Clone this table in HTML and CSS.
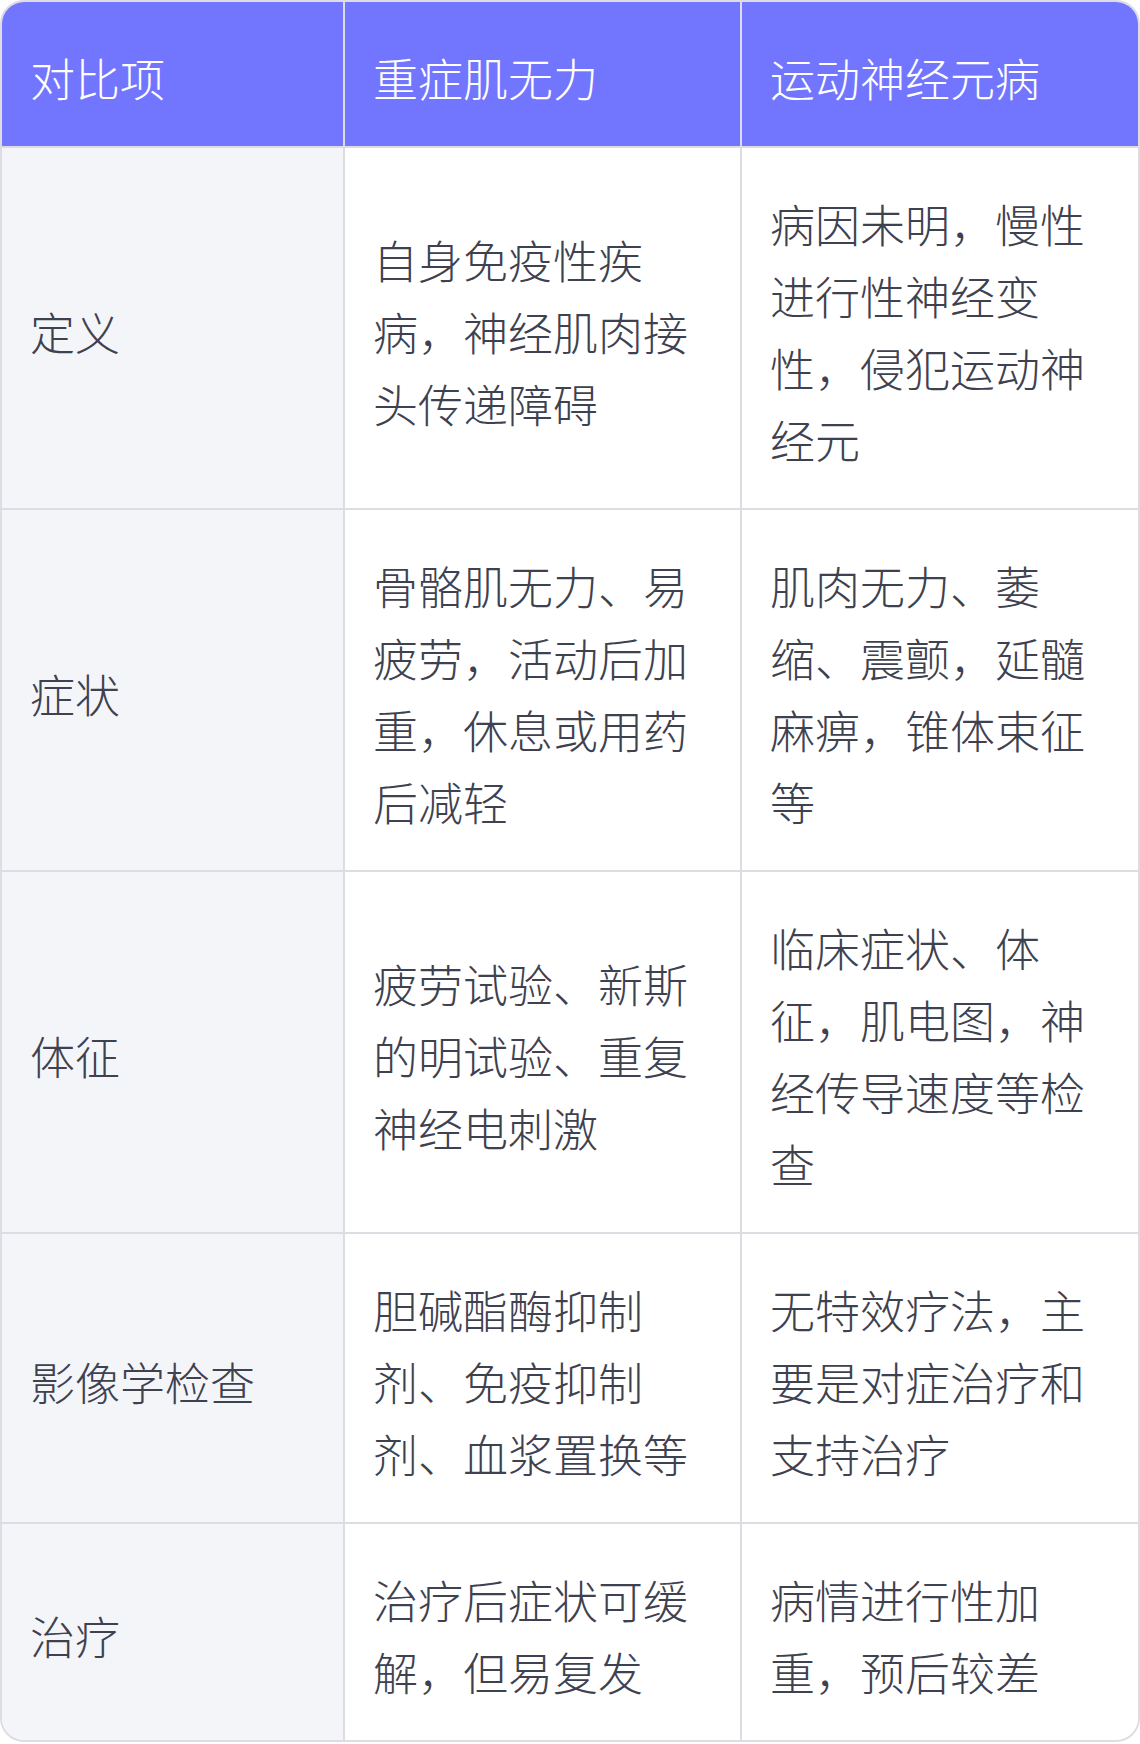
FILE: index.html
```html
<!DOCTYPE html>
<html lang="zh-CN">
<head>
<meta charset="utf-8">
<link rel="stylesheet" href="styles.css">
<title>重症肌无力与运动神经元病对比</title>
</head>
<body>
<div class="wrap">
  <table class="cmp">
    <colgroup>
      <col class="c1">
      <col class="c2">
      <col class="c3">
    </colgroup>
    <thead>
      <tr>
        <th>对比项</th>
        <th>重症肌无力</th>
        <th>运动神经元病</th>
      </tr>
    </thead>
    <tbody>
      <tr>
        <td class="key">定义</td>
        <td>自身免疫性疾病，神经肌肉接头传递障碍</td>
        <td>病因未明，慢性进行性神经变性，侵犯运动神经元</td>
      </tr>
      <tr>
        <td class="key">症状</td>
        <td>骨骼肌无力、易疲劳，活动后加重，休息或用药后减轻</td>
        <td>肌肉无力、萎缩、震颤，延髓麻痹，锥体束征等</td>
      </tr>
      <tr>
        <td class="key">体征</td>
        <td>疲劳试验、新斯的明试验、重复神经电刺激</td>
        <td>临床症状、体征，肌电图，神经传导速度等检查</td>
      </tr>
      <tr>
        <td class="key">影像学检查</td>
        <td>胆碱酯酶抑制剂、免疫抑制剂、血浆置换等</td>
        <td>无特效疗法，主要是对症治疗和支持治疗</td>
      </tr>
      <tr>
        <td class="key">治疗</td>
        <td>治疗后症状可缓解，但易复发</td>
        <td>病情进行性加重，预后较差</td>
      </tr>
    </tbody>
  </table>
</div>
</body>
</html>
```

FILE: styles.css
```css
html, body {
  margin: 0;
  padding: 0;
  background: #ffffff;
}

.wrap {
  width: 1140px;
  box-sizing: border-box;
  border: 2px solid #dcdce2;
  border-radius: 24px;
  overflow: hidden;
}

.cmp {
  width: 100%;
  border-collapse: separate;
  border-spacing: 0;
  table-layout: fixed;
  font-family: "Noto Sans CJK SC", "Noto Sans", sans-serif;
  font-size: 45px;
  line-height: 72px;
  color: #3e414f;
}

.c1 { width: 343px; }
.c2 { width: 397px; }
.c3 { width: auto; }

.cmp th,
.cmp td {
  padding: 40px 28px 32px;
  border-right: 2px solid #dcdce2;
  border-bottom: 2px solid #dcdce2;
  vertical-align: middle;
  text-align: left;
  font-weight: 300;
}

.cmp th:last-child,
.cmp td:last-child {
  border-right: none;
}

.cmp tbody tr:last-child td {
  border-bottom: none;
}

.cmp th {
  background: #7276ff;
  color: #ffffff;
}

.cmp td {
  background: #ffffff;
}

.cmp td.key {
  background: #f4f5f9;
}
```
